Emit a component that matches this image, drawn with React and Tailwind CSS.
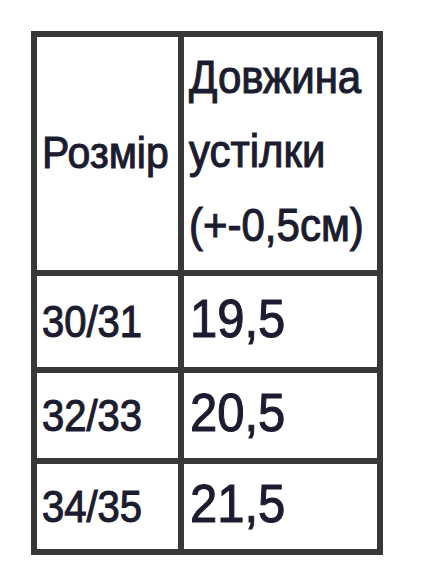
import React from "react";

const rows = [
  { size: "30/31", length: "19,5" },
  { size: "32/33", length: "20,5" },
  { size: "34/35", length: "21,5" },
];

const App = () => {
  return (
    <div
      className="w-[428px] h-[570px] bg-white pt-[31px] pl-[31px]"
      style={{ fontFamily: '"Liberation Sans", Arial, sans-serif' }}
    >
      <div className="grid grid-cols-[141px_193px] grid-rows-[233px_91px_85px_85px] gap-[6px] p-[6px] bg-[#383838] w-max text-[#1c1c30] [-webkit-text-stroke:1px_#1c1c30]">
        {/* header */}
        <div className="bg-white flex items-center pl-[5px]">
          <span className="text-[41px] leading-none inline-block scale-y-110">Розмір</span>
        </div>
        <div className="bg-white flex flex-col justify-center pl-[5px] pb-[4px] text-[42px] leading-[74px]">
          <span className="inline-block scale-y-110 origin-left">Довжина</span>
          <span className="inline-block scale-y-110 origin-left">устілки</span>
          <span className="inline-block scale-y-110 origin-left">(+-0,5см)</span>
        </div>

        {rows.map((row) => (
          <React.Fragment key={row.size}>
            <div className="bg-white flex items-center pl-[5px]">
              <span className="text-[40px] leading-none inline-block scale-y-110">{row.size}</span>
            </div>
            <div className="bg-white flex items-center pl-[6px] pb-[6px]">
              <span className="text-[49px] leading-none inline-block scale-y-110">{row.length}</span>
            </div>
          </React.Fragment>
        ))}
      </div>
    </div>
  );
};

export default App;
